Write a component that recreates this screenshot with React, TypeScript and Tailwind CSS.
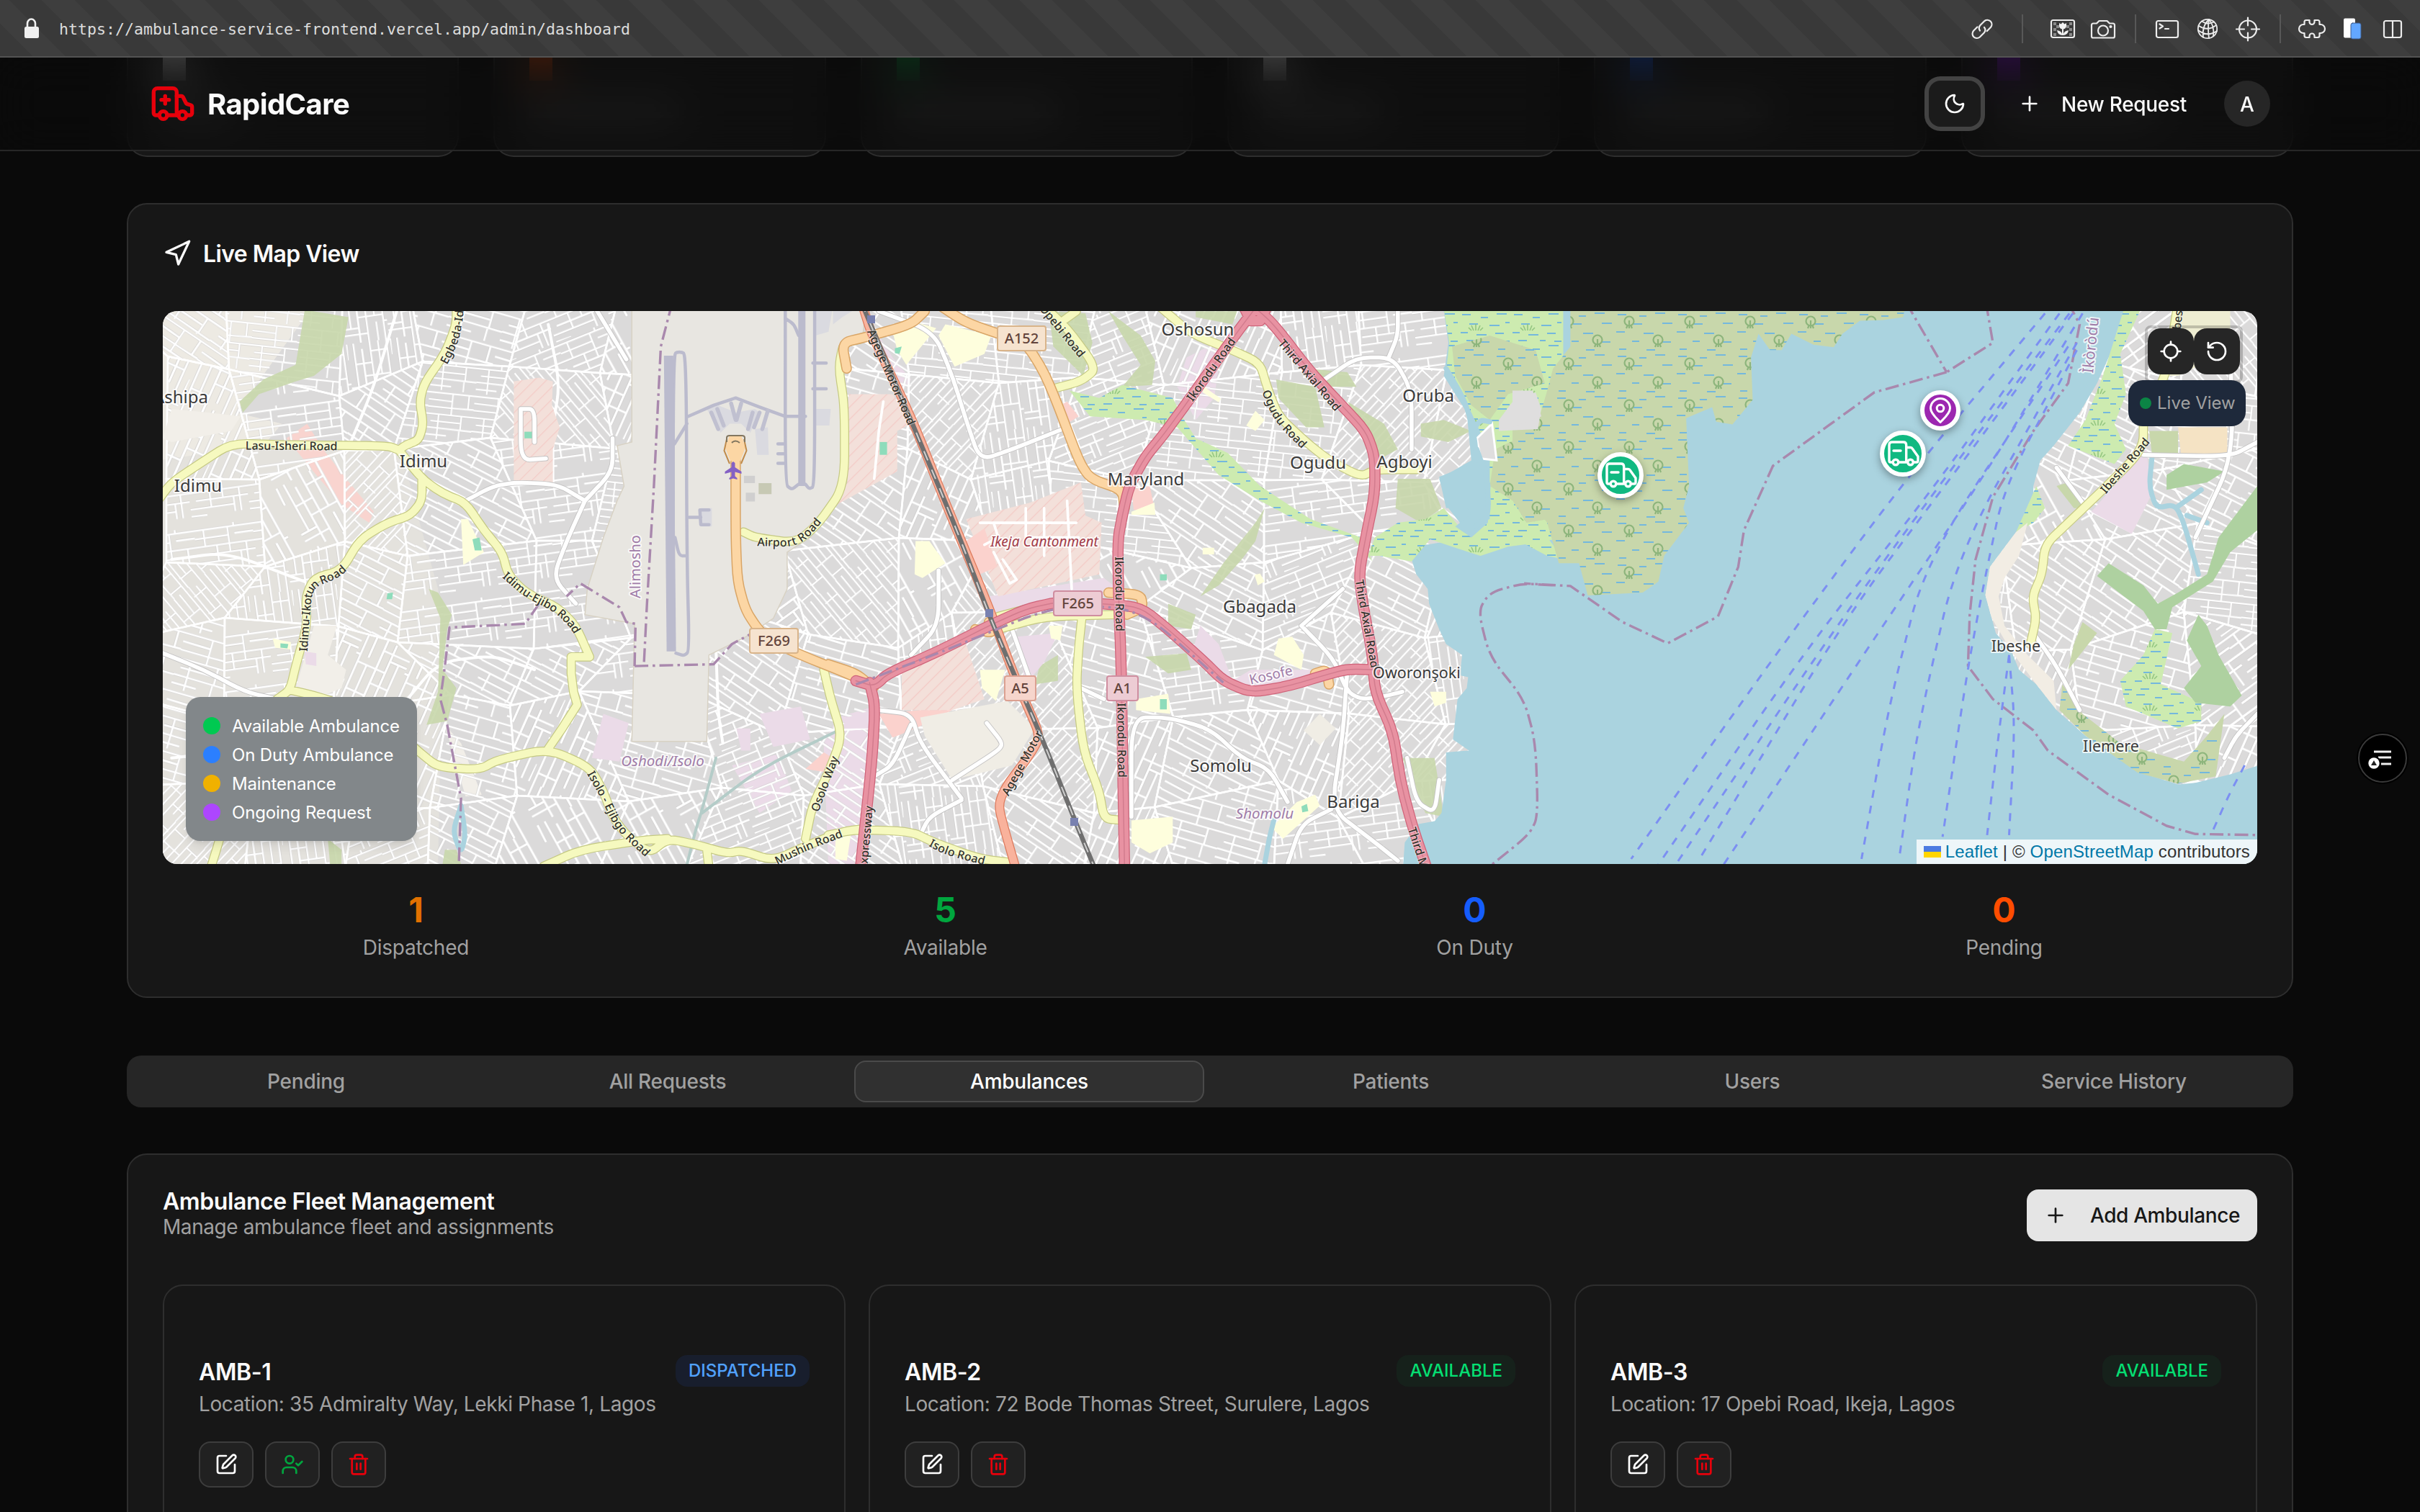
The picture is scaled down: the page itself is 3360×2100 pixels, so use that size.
import React from "react";
import {
  Ambulance,
  Locate,
  Moon,
  Navigation,
  Plus,
  RotateCcw,
  SquarePen,
  Trash2,
  UserCheck,
} from "lucide-react";

/* ------------------------------------------------------------------ */
/* Map geometry                                                        */
/* ------------------------------------------------------------------ */

type Sheet = { sx: number; sy: number; dx: number; dy: number };
type Pt = [number, number];

const WEST: Sheet = { sx: 1.568, sy: 1.96, dx: -26, dy: -12 };
const MID: Sheet = { sx: 1.568, sy: 1.96, dx: 924, dy: -12 };
const EAST: Sheet = { sx: 1.2444, sy: 1.96, dx: 1874, dy: -12 };

const pts = (s: Sheet, raw: string): Pt[] =>
  raw.split(" ").map((p) => {
    const [x, y] = p.split(",").map(Number);
    return [+(x / s.sx + s.dx).toFixed(1), +(y / s.sy + s.dy).toFixed(1)];
  });

const poly = (p: Pt[]) => "M" + p.map((q) => q.join(" ")).join("L") + "Z";
const area = (s: Sheet, raw: string) => poly(pts(s, raw));
const line = (s: Sheet, raw: string) =>
  "M" +
  pts(s, raw)
    .map((q) => q.join(" "))
    .join("L");

// Polyline whose corners are rounded close to each vertex.
const curve = (s: Sheet, raw: string) => {
  const p = pts(s, raw);
  if (p.length < 3) return "M" + p.map((q) => q.join(" ")).join("L");
  const mix = (a: Pt, b: Pt, t: number) => `${(a[0] + (b[0] - a[0]) * t).toFixed(1)} ${(a[1] + (b[1] - a[1]) * t).toFixed(1)}`;
  let d = `M${p[0][0]} ${p[0][1]}`;
  for (let i = 1; i < p.length - 1; i++) {
    d += `L${mix(p[i - 1], p[i], 0.62)}Q${p[i][0]} ${p[i][1]} ${mix(p[i], p[i + 1], 0.38)}`;
  }
  const end = p[p.length - 1];
  return d + `L${end[0]} ${end[1]}`;
};

const STREET_ANGLES = [6, -22, 34, 61, -47, 82, 16, -66, 50, -8, 27, -36];

// Districts: a jittered grid of quads, each with its own street direction.
const districts = (() => {
  let seed = 7;
  const rnd = () => ((seed = (seed * 16807) % 2147483647) / 2147483647);
  const cols = 23;
  const rows = 7;
  const v: Pt[][] = [];
  for (let r = 0; r <= rows; r++) {
    v.push([]);
    for (let c = 0; c <= cols; c++)
      v[r].push([
        Math.round((c / cols) * 2960 - 26 + (rnd() - 0.5) * 80),
        Math.round((r / rows) * 820 - 26 + (rnd() - 0.5) * 64),
      ]);
  }
  const out: { d: string; k: number }[] = [];
  for (let r = 0; r < rows; r++)
    for (let c = 0; c < cols; c++)
      out.push({
        d: poly([v[r][c], v[r][c + 1], v[r + 1][c + 1], v[r + 1][c]]),
        k: Math.floor(rnd() * STREET_ANGLES.length),
      });
  return out;
})();

const LAND: { f: string; d: string }[] = [
  { f: "#edeae3", d: area(WEST, "30,0 360,24 200,300 300,330 240,420 120,500 30,560") },
  { f: "#e4e2dd", d: area(WEST, "30,430 200,400 560,400 600,600 640,780 650,900 640,1529 30,1529") },
  { f: "#f2efe9", d: area(WEST, "655,1150 690,1200 735,1340 700,1345") },
  { f: "#f9d4cf", d: area(WEST, "310,370 355,330 390,400 440,480 500,570 490,600 430,550 375,470") },
  { f: "#ebdbe8", d: area(MID, "110,90 140,150 180,210 150,260") },
  { f: "#ebdbe8", d: area(MID, "780,150 860,100 840,260 800,320 760,230") },
  { f: "#ebdbe8", d: area(MID, "20,1130 100,1100 90,1250 60,1529 0,1529 -10,1200") },
  { f: "#ebdbe8", d: area(WEST, "1280,1260 1380,1230 1410,1330 1340,1390") },
];

const OPEN_WEST = [
  area(WEST, "60,290 140,300 210,310 190,350 60,380 41,370"),
  area(WEST, "370,880 420,880 400,960 440,1000 430,1050 380,1075 330,1050"),
];

const INDUSTRY = [
  area(WEST, "1000,1120 1055,1145 1035,1250 975,1240"),
  area(WEST, "1340,1120 1430,1100 1450,1190 1370,1210"),
  area(WEST, "1290,1160 1320,1160 1320,1220 1300,1220"),
  area(WEST, "350,950 375,955 375,990 352,985"),
  area(MID, "350,800 600,750 640,790 480,830 370,860"),
  area(MID, "410,910 500,900 470,980 430,1040"),
  area(MID, "810,880 850,930 880,1030 920,1000 1080,1000 1000,1050 920,1062 860,1030 790,960"),
  area(MID, "40,1130 95,1110 90,1160 30,1160"),
];

const PARKS = [
  area(WEST, "350,20 445,40 430,140 370,200 330,215 250,250 215,300 208,270 260,210 330,170"),
  area(WEST, "620,780 640,790 670,850 660,890 650,1000 680,1050 660,1140 615,1150 640,1060 645,860"),
  area(WEST, "655,1490 680,1490 690,1529 650,1529"),
  area(WEST, "400,1460 430,1490 430,1529 405,1529"),
  area(MID, "480,24 560,30 575,110 555,200 490,120"),
  area(MID, "610,24 680,90 712,160 705,225 640,230 680,170 640,90"),
  area(MID, "800,24 890,24 880,60 800,40"),
  area(MID, "975,210 1060,230 1080,340 1040,340 980,260"),
  area(MID, "1040,180 1130,190 1150,230 1080,230"),
  area(MID, "1130,270 1210,330 1240,400 1195,430 1170,350"),
  area(MID, "1290,330 1340,320 1400,350 1350,380 1290,365"),
  area(MID, "1240,480 1310,480 1335,560 1290,600 1235,560"),
  area(MID, "740,820 800,850 790,890 740,880"),
  area(MID, "690,965 780,955 790,1000 740,1010"),
  area(MID, "460,990 500,960 500,1030 450,1040"),
  area(MID, "1250,1240 1320,1240 1340,1400 1300,1390"),
  area(MID, "930,600 950,560 930,650 900,700 850,770 810,800 860,710"),
];

const YELLOWS = [
  area(WEST, "690,590 705,590 740,680 695,715"),
  area(WEST, "280,915 320,925 318,945 285,940"),
  area(WEST, "1505,1455 1540,1440 1530,1520 1505,1515"),
  area(MID, "140,80 180,50 235,70 170,170 150,130"),
  area(MID, "255,60 355,90 340,140 275,175 240,90"),
  area(MID, "190,650 220,650 255,710 205,750 188,740"),
  area(MID, "930,295 950,320 930,350 910,335"),
  area(MID, "818,230 855,262 850,272 815,245"),
  area(MID, "660,570 710,545 712,578 660,578"),
  area(MID, "980,915 1010,910 1035,960 1030,1000 970,960"),
  area(MID, "330,1000 385,1000 365,1085 335,1050"),
  area(MID, "660,1410 750,1400 750,1470 700,1500 660,1470"),
  area(MID, "1310,1060 1345,1060 1345,1090 1320,1100"),
  area(MID, "480,880 510,880 505,920 485,915"),
  area(MID, "1020,1360 1060,1340 1070,1370 990,1460 965,1430"),
  area(MID, "670,1080 740,1065 745,1120 670,1110"),
  area(MID, "815,668 840,668 840,686 815,686"),
  area(MID, "928,742 940,738 950,760 935,770"),
];

const PITCHES = [
  area(WEST, "715,645 730,640 735,675 720,675"),
  area(WEST, "828,352 850,352 850,370 828,370"),
  area(WEST, "530,792 542,790 540,808 528,808"),
  area(WEST, "297,928 314,930 312,942 297,940"),
  area(MID, "112,380 128,380 128,415 112,415"),
  area(MID, "722,1080 737,1080 737,1108 722,1108"),
  area(MID, "722,740 737,740 737,757 722,757"),
  area(MID, "145,125 160,120 155,140 145,138"),
  area(MID, "1030,1372 1042,1365 1045,1385 1032,1388"),
];

const MILITARY = [
  area(WEST, "805,215 860,205 890,215 888,280 905,340 890,400 890,495 805,490"),
  area(MID, "45,250 140,250 180,330 150,350 150,460 20,550"),
  area(MID, "300,590 440,545 550,490 560,580 595,600 590,740 370,800 310,620"),
  area(MID, "160,990 300,930 340,1080 270,1110 160,1110"),
];

const RETAIL = [
  area(MID, "300,650 340,615 368,720 330,740"),
  area(MID, "520,270 545,310 520,330 505,280"),
  area(MID, "110,1120 200,1110 270,1110 190,1160 140,1185"),
  area(MID, "660,510 700,500 710,560 665,565"),
  area(WEST, "1440,1270 1480,1225 1500,1240 1490,1280"),
];

const OPEN = [
  area(MID, "200,1130 390,1085 450,1160 400,1260 270,1300 210,1180"),
  area(MID, "1070,1120 1105,1160 1070,1205 1035,1165"),
];

const MARSH_STRIPS = [
  area(MID, "525,240 590,260 640,225 750,260 770,310 800,370 870,410 940,500 1050,590 1160,640 1185,705 1140,640 1030,600 940,540 850,470 760,340 690,320 570,310"),
];

const AIRPORT = area(
  WEST,
  "1062,0 1572,0 1565,90 1525,110 1515,180 1530,300 1530,490 1450,640 1400,680 1400,780 1370,860 1310,910 1230,960 1225,1195 1062,1195 1068,875 960,850 965,780 1000,640 1030,540 1045,500 1030,390 1062,380"
);

const RUNWAYS: { d: string; w: number }[] = [
  { d: curve(WEST, "1142,145 1148,950"), w: 13 },
  { d: curve(WEST, "1432,10 1432,500"), w: 10 },
];
const TAXI = [
  curve(WEST, "1152,900 1152,140 1165,134 1180,140 1182,700 1187,950 1175,962 1158,955"),
  line(WEST, "1185,310 1240,280 1288,260 1340,285 1395,310 1440,310"),
  line(WEST, "1182,330 1155,385"),
  curve(WEST, "1156,640 1165,690 1182,690"),
  curve(WEST, "1396,10 1396,495 1410,510 1425,495"),
  curve(WEST, "1398,45 1415,60 1425,90"),
  curve(WEST, "1460,10 1460,500 1448,508 1440,495"),
  line(WEST, "1456,165 1485,165"),
  line(WEST, "1456,235 1485,235"),
  line(WEST, "1187,585 1212,585"),
  line(WEST, "1230,565 1210,565 1212,605 1230,605"),
  line(WEST, "1380,385 1396,385"),
  line(WEST, "1380,412 1396,412"),
  line(WEST, "1380,438 1396,438"),
];
const APRONS = [
  area(WEST, "1225,290 1250,280 1290,300 1330,290 1340,300 1320,355 1300,330 1275,330 1255,355"),
  area(WEST, "1330,345 1358,340 1360,415 1335,415"),
  area(WEST, "1212,560 1236,560 1236,610 1212,610"),
  area(WEST, "1462,290 1495,290 1492,335 1462,335"),
  area(WEST, "1460,10 1500,10 1490,80 1462,90"),
  area(WEST, "1500,20 1560,10 1520,40 1500,60"),
];

const WATER = poly([
  ...pts(MID, "1335,-20 1350,110 1340,200 1390,300 1400,430 1330,480 1350,560 1400,640 1300,660 1270,700 1280,740 1305,780 1308,820 1330,890 1345,930 1380,960 1375,1015 1393,1020 1390,1050 1370,1080 1360,1190 1395,1220 1345,1225 1345,1300 1335,1390 1320,1412 1285,1420 1255,1470 1250,1560"),
  ...pts(EAST, "1300,1560 1300,1255 1240,1285 1180,1308 1150,1312 1085,1280 1040,1235 990,1180 940,1110 905,1040 875,1000 862,950 835,900 828,860 817,797 825,720 870,625 900,570 900,500 912,430 935,390 980,300 1010,220 1030,150 1055,60 1056,-20"),
]);

const LIGHT_MARSH = [
  area(MID, "1335,-20 1600,-20 1600,640 1540,655 1480,665 1420,690 1370,670 1310,645 1270,705 1200,690 1175,690 1190,640 1240,600 1300,590 1340,560 1380,620 1440,590 1440,410 1400,300 1370,230 1345,190 1352,110"),
  area(EAST, "0,0 60,0 60,640 90,700 60,690 0,640"),
  area(EAST, "1056,20 1085,20 1050,140 1060,250 1040,330 1060,400 1040,440 960,390 990,320 1020,200"),
  area(EAST, "1110,890 1140,900 1120,1040 1190,1090 1190,1140 1150,1160 1060,1100 1050,1030 1090,960"),
  area(EAST, "905,500 920,560 900,600 870,625"),
];

const MANGROVE = [
  area(EAST, "100,0 680,0 675,40 640,48 600,50 570,85 555,122 520,115 482,85 465,130 445,130 425,85 412,150 415,265 380,332 352,325 345,285 300,315 305,500 295,560 305,600 262,690 252,760 225,790 130,798 115,710 80,710 60,600 40,560 0,450 0,345 45,320 60,240 70,180 100,120"),
  area(MID, "1358,120 1440,90 1540,130 1560,220 1480,250 1440,320 1400,280 1365,200"),
  area(MID, "1452,400 1568,330 1568,590 1520,600 1490,540 1440,500"),
  area(EAST, "950,1040 985,1120 1050,1200 1160,1250 1200,1180 1230,1120 1215,1290 1150,1310 1080,1280 990,1180 945,1110"),
];

const EAST_GREEN = [
  area(EAST, "1287,500 1287,620 1240,680 1210,760 1140,830 1130,890 1110,890 1090,840 1010,745 1030,710 1090,770 1115,820 1150,790 1200,740 1220,640"),
  area(EAST, "1200,880 1220,960 1260,1070 1240,1100 1180,1090 1160,1050 1190,990 1165,920 1185,850"),
  area(EAST, "1130,470 1160,440 1230,460 1200,490 1130,510"),
];
const EAST_PARK = [
  area(EAST, "1100,350 1150,350 1150,415 1105,415"),
  area(EAST, "940,500 960,490 990,560 970,560"),
  area(EAST, "960,1000 990,940 1010,900 985,870 970,930"),
];

const STREAMS = [
  curve(MID, "1345,180 1385,265 1405,350 1412,430"),
  curve(MID, "1405,345 1420,320 1440,325"),
  curve(MID, "1412,400 1435,480 1438,580 1410,610"),
  curve(MID, "950,1529 960,1460 970,1410"),
  curve(EAST, "1105,420 1100,500 1112,560 1145,550 1160,600 1185,740"),
  curve(EAST, "1150,555 1190,510"),
  curve(EAST, "1165,580 1200,600"),
  curve(WEST, "690,1370 672,1440 690,1500 700,1450 690,1370"),
];

const CANALS = [
  curve(WEST, "1180,1540 1200,1440 1215,1380 1245,1240"),
  curve(WEST, "1215,1390 1340,1270 1520,1160"),
];

const WHITE_ROADS = [
  curve(WEST, "41,955 130,1000 220,1060 290,1080"),
  curve(WEST, "700,540 760,500 810,490 900,495 960,540"),
  curve(WEST, "960,540 920,650 890,750 940,820"),
  curve(WEST, "960,540 1020,460 1020,370"),
  curve(WEST, "980,10 1050,155"),
  curve(WEST, "820,290 820,430 875,425"),
  curve(WEST, "820,290 850,290 850,380"),
  curve(MID, "110,24 230,80 270,200 300,320 330,430 400,400 510,345"),
  curve(MID, "1080,210 1150,150 1230,150 1270,240 1270,400"),
  curve(MID, "1240,24 1240,90 1220,150"),
  curve(MID, "1030,880 1100,970 1130,1060 1160,1080 1200,1075 1250,1060"),
  curve(MID, "1130,1000 1120,1180 1095,1380 1180,1460 1240,1520"),
  curve(MID, "660,1400 660,1130 740,1130 830,1160 900,1240 960,1270 1000,1360"),
  curve(MID, "110,1110 180,1120 200,1200 290,1350"),
  curve(MID, "180,1150 140,1260 100,1290"),
  curve(MID, "270,1300 370,1220 380,1200 345,1145"),
  curve(MID, "290,1355 220,1400 200,1450"),
  curve(MID, "1000,1529 1030,1420 1095,1380"),
  curve(MID, "240,730 240,880 180,960"),
  curve(MID, "1030,880 1120,780"),
  curve(MID, "550,1050 600,1080"),
  curve(MID, "1260,1240 1280,1360 1320,1390 1330,1300"),
  curve(MID, "400,890 440,1030"),
  curve(EAST, "900,900 940,990 980,1110"),
  curve(EAST, "1090,415 1240,420 1287,380"),
  curve(EAST, "1240,120 1245,420 1180,640"),
  curve(EAST, "940,450 985,545"),
  curve(EAST, "1230,1240 1250,1180 1287,1120"),
];

const LANES = [
  curve(WEST, "550,24 500,230 450,380"),
  curve(WEST, "890,495 890,340 905,220 880,60"),
  curve(WEST, "1245,940 1250,1120 1260,1200"),
  curve(WEST, "560,1100 640,980 760,960 850,1000"),
  curve(WEST, "60,700 180,680 350,760"),
  curve(WEST, "60,1240 200,1220 290,1080"),
  line(MID, "330,600 360,600 370,640 340,660"),
  line(MID, "340,600 540,600"),
  line(MID, "430,560 430,640 545,640"),
  line(MID, "360,680 395,765 410,755 380,700"),
  line(MID, "470,560 470,690"),
  line(MID, "520,540 530,780"),
  line(MID, "120,270 110,350 100,480"),
];

const YELLOW_ROADS = [
  curve(WEST, "30,540 60,490 120,440 190,383 300,388 530,390 555,402"),
  curve(WEST, "680,0 680,60 655,140 610,220 600,270 608,330 598,375 570,388 555,402"),
  curve(WEST, "555,402 585,450 610,485 650,520 700,545 740,620 780,680 792,740 830,790 900,830 940,880 970,965"),
  line(WEST, "970,965 930,965 930,1010 935,1060 943,1095 910,1160 880,1215"),
  curve(WEST, "605,480 605,540 580,580 530,600 470,645 430,730 370,750 352,800 355,880 330,990 318,1055 290,1080"),
  curve(WEST, "318,1055 370,1070 420,1090 560,1180 600,1225 640,1265 730,1272 770,1245 880,1215 970,1265 1000,1330 1020,1400 1050,1450 1100,1500 1140,1460 1200,1475 1270,1500 1300,1492 1370,1520 1440,1480 1520,1440 1575,1432"),
  curve(WEST, "870,1535 950,1490 1080,1465 1140,1460"),
  curve(WEST, "1305,625 1330,640 1420,655 1470,600 1525,500 1525,280 1512,180 1522,110 1560,100"),
  curve(WEST, "145,1540 165,1460 200,1300 290,1080"),
  curve(WEST, "1480,1000 1495,1080 1520,1180 1490,1280 1455,1370 1440,1460"),
  line(WEST, "1225,1490 1230,1540"),
  curve(MID, "465,5 520,70 585,180 550,215 490,235"),
  curve(MID, "725,15 790,85 880,130 940,165 955,230 980,310 1040,380 1090,430 1160,475 1190,455 1285,455"),
  curve(MID, "552,860 545,940 540,1050 555,1220 590,1330 600,1405 640,1410"),
  curve(MID, "370,890 470,855 620,850"),
  curve(MID, "370,855 430,835"),
  line(MID, "500,60 540,24"),
  curve(MID, "0,1450 60,1435 180,1440 230,1470 330,1515 400,1525"),
  curve(EAST, "1150,0 1130,200 1090,300 1090,400 1020,510 960,600 920,660 915,740 898,800 905,860 895,930"),
];

const ORANGE_ROADS = [
  curve(WEST, "1288,400 1288,640 1292,760 1310,840 1340,895 1370,925 1430,960 1540,1015 1590,1045"),
  curve(MID, "245,10 300,55 370,85 430,110 470,190 500,280 545,430 570,480 640,510 645,560"),
  curve(MID, "40,180 30,110 80,95 180,60 210,24"),
  curve(MID, "610,790 680,795 685,830 650,850"),
  curve(MID, "0,985 60,1010 90,1040"),
  curve(MID, "320,890 360,900 350,870"),
  curve(MID, "1060,1010 1085,1000 1090,1040"),
];

const TRUNK_ROADS = [
  curve(MID, "75,10 95,90 180,310 260,560 350,830 400,1000 430,1090 462,1180 440,1230 385,1320 370,1370 385,1440 408,1540"),
];

const MOTORWAYS = [
  curve(MID, "930,15 885,90 800,240 730,360 690,420 655,500 640,580 630,650 632,800 638,1000 640,1200 645,1540"),
  curve(MID, "930,15 970,60 1050,190 1110,270 1170,350 1190,420 1190,520 1170,640 1155,740 1165,830 1185,960 1190,1060 1230,1170 1245,1300 1270,1420 1303,1540"),
  curve(MID, "60,1030 100,1045 130,1010 240,950 350,880 430,835 500,815 600,820 680,830 740,890 820,980 860,1030 920,1062 1000,1045 1080,1015 1130,998 1190,1000"),
  curve(MID, "90,1035 102,1100 95,1250 70,1540"),
  area(MID, "900,0 960,0 940,50 920,50"),
];

const RAIL = curve(MID, "72,0 180,320 280,620 350,850 400,1000 470,1200 540,1420 580,1540");

const BORDERS = [
  line(WEST, "1150,0 1125,120 1110,500 1095,820 1088,990"),
  line(WEST, "1068,990 1240,985 1280,930 1325,900"),
  line(WEST, "1068,990 1070,875 1050,870 1035,830 950,765 920,800"),
  line(WEST, "860,820 830,875 665,885 655,990 645,1080 660,1150 690,1350 685,1540"),
  curve(MID, "60,1040 240,955 500,822 680,835 860,1035"),
  curve(MID, "1575,770 1510,765 1440,790 1415,840 1440,965 1515,1080 1540,1200 1545,1400 1525,1450 1435,1540"),
  line(EAST, "680,0 750,190"),
  line(EAST, "818,0 830,110 750,190"),
  line(EAST, "750,190 625,245 450,445 400,620 390,720 355,855 268,928 190,870 100,772 20,765"),
  line(EAST, "960,0 980,60 960,220 900,350 830,530 800,700 790,850 787,990 830,1080 900,1165 925,1220 1030,1340 1130,1425 1180,1447 1290,1450"),
];

const FERRIES = [
  curve(EAST, "920,30 680,480 440,990 205,1515"),
  curve(EAST, "945,30 730,500 500,960 250,1535"),
  curve(EAST, "962,30 760,450 560,880 280,1535"),
  curve(EAST, "968,30 775,440 575,860 325,1510"),
  curve(EAST, "985,30 820,460 640,880 365,1530"),
  curve(EAST, "960,120 715,700 650,1100 603,1515"),
  curve(EAST, "975,110 770,680 700,1160 668,1515"),
  curve(EAST, "975,130 850,500 815,760 785,1010 743,1455"),
  curve(EAST, "858,960 838,1200 820,1450"),
  curve(EAST, "858,960 868,1150 858,1450"),
  curve(EAST, "1265,1260 1238,1340 1208,1445"),
];

const ROAD_LABELS: { t: string; d: string }[] = [
  { t: "Egbeda-Idimu", d: curve(WEST, "652,165 678,100 688,24 690,-100") },
  { t: "Lasu-Isheri Road", d: curve(WEST, "221,390 450,392") },
  { t: "Idimu-Ikotun Road", d: curve(WEST, "347,950 352,850 360,770 430,735 470,660") },
  { t: "Idimu-Ejibo Road", d: curve(WEST, "785,740 830,790 900,835 940,885 965,960") },
  { t: "Isolo - Ejibgo Road", d: curve(WEST, "972,1278 1000,1340 1035,1430 1100,1505 1130,1540") },
  { t: "Osolo Way", d: curve(WEST, "1460,1385 1485,1300 1515,1200") },
  { t: "Mushin Road", d: curve(WEST, "1375,1522 1440,1482 1540,1435") },
  { t: "Airport Road", d: curve(WEST, "1335,652 1425,655 1490,560") },
  { t: "Agege Motor Road", d: curve(MID, "92,75 190,355") },
  { t: "Opebi Road", d: curve(MID, "465,10 560,155") },
  { t: "Ikorodu Road", d: curve(MID, "786,265 895,75") },
  { t: "Third Axial Road", d: curve(MID, "985,105 1130,320") },
  { t: "Ogudu Road", d: curve(MID, "952,240 980,320 1060,420") },
  { t: "Third Axial Road", d: curve(MID, "1156,755 1195,1030") },
  { t: "Ikorodu Road", d: curve(MID, "633,692 635,930") },
  { t: "Ikorodu Road", d: curve(MID, "638,1090 640,1330") },
  { t: "Agege Motor", d: curve(MID, "385,1340 468,1150") },
  { t: "Isolo Road", d: curve(MID, "222,1470 260,1495 380,1533") },
  { t: "Expressway", d: curve(MID, "76,1545 92,1330") },
  { t: "Third Mainland", d: curve(MID, "1270,1430 1335,1680") },
  { t: "Ibeshe Road", d: curve(EAST, "1020,515 1115,340") },
  { t: "Ibeshe Road", d: curve(EAST, "1147,85 1160,-120") },
];

const PLACES = [
  { t: "Ashipa", x: 25, y: 128 },
  { t: "Idimu", x: 362, y: 217 },
  { t: "Idimu", x: 49, y: 251 },
  { t: "Oshosun", x: 1437, y: 34 },
  { t: "Oruba", x: 1757, y: 126 },
  { t: "Ogudu", x: 1604, y: 219 },
  { t: "Agboyi", x: 1724, y: 218 },
  { t: "Maryland", x: 1365, y: 242 },
  { t: "Gbagada", x: 1523, y: 419 },
  { t: "Somolu", x: 1469, y: 640 },
  { t: "Bariga", x: 1653, y: 690 },
];

const SMALL_PLACES = [
  { t: "Oworonşoki", x: 1741, y: 510 },
  { t: "Ibeshe", x: 2573, y: 473 },
  { t: "Ilemere", x: 2705, y: 612 },
];

const SHIELDS = [
  { t: "F269", x: 815, y: 441, w: 67, f: "#f6e3cf", s: "#d9b48a" },
  { t: "A152", x: 1159, y: 21, w: 67, f: "#f6e3cf", s: "#d9b48a" },
  { t: "F265", x: 1237, y: 389, w: 67, f: "#edccd4", s: "#cf8ea0" },
  { t: "A5", x: 1169, y: 507, w: 43, f: "#f6d5cc", s: "#dba091" },
  { t: "A1", x: 1311, y: 507, w: 43, f: "#edccd4", s: "#cf8ea0" },
];

function Strokes({ d, color, width, dash, cap = "round" }: { d: string[]; color: string; width: number; dash?: string; cap?: "round" | "butt" }) {
  return <path d={d.join("")} fill="none" stroke={color} strokeWidth={width} strokeDasharray={dash} strokeLinecap={cap} strokeLinejoin="round" />;
}

function Fill({ d, color }: { d: string[]; color: string }) {
  return (
    <>
      {d.map((p, i) => (
        <path key={i} d={p} fill={color} />
      ))}
    </>
  );
}

function MapCanvas() {
  return (
    <svg viewBox="0 0 2908 768" className="block h-full w-full" fontFamily="'Noto Sans', sans-serif">
      <defs>
        {STREET_ANGLES.map((a, i) => (
          <pattern key={a} id={`streets-${i}`} width={i % 2 ? 112 : 96} height={i % 3 ? 84 : 104} patternUnits="userSpaceOnUse" patternTransform={`rotate(${a}) scale(${0.66 + (i % 4) * 0.07})`}>
            {[
              { c: "#cdcccc", w: 4.8 },
              { c: "#ffffff", w: 3.5 },
            ].map((s) => (
              <path
                key={s.c}
                fill="none"
                stroke={s.c}
                strokeWidth={s.w}
                d={
                  i % 2
                    ? "M0 7H112M0 23H64M76 21H112M0 39H112M12 55H112M0 70H84M0 83L30 84M18 7V39M64 7V55M96 39V84M40 39V70M76 0V7M84 55V84"
                    : "M0 6L96 6M0 21L50 22M50 36L96 35M0 36H50M0 51H96M8 66H70M0 80L96 81M0 95H44M50 6V51M24 51V104M72 51V81M84 6V35M70 81V104"
                }
              />
            ))}
          </pattern>
        ))}
        <pattern id="hatch" width="12" height="12" patternUnits="userSpaceOnUse" patternTransform="rotate(45)">
          <rect width="12" height="12" fill="#f3e0da" />
          <path d="M0 0V12" stroke="#f3cbc6" strokeWidth="2.5" />
        </pattern>
        <pattern id="marsh" width="72" height="44" patternUnits="userSpaceOnUse">
          <rect width="72" height="44" fill="#cdebb0" />
          <path d="M4 5H16M30 9H40M52 4H66M14 18H26M42 20H56M64 16H70M2 30H12M24 33H38M50 31H62M10 41H22M40 41H48M60 42H70" stroke="#74b8dd" strokeWidth="2.2" />
          <path d="M20 27l-3-7M23 27v-9M26 27l3-7M17 27l-4-4M29 27l4-4" stroke="#93c680" strokeWidth="1.6" />
        </pattern>
        <pattern id="mangrove" width="84" height="58" patternUnits="userSpaceOnUse">
          <rect width="84" height="58" fill="#c8d7ab" />
          <path d="M4 5H16M34 7H44M56 3H70M26 18H38M66 17H80M2 29H14M40 31H54M24 42H34M66 43H78M6 53H16M44 54H56" stroke="#74b8dd" strokeWidth="2.2" />
          <g fill="none" stroke="#8db57c" strokeWidth="2.2">
            <circle cx="20" cy="14" r="6.500" />
            <path d="M20 13V24M16 24l2-5M24 24l-2-5" />
            <circle cx="60" cy="40" r="6.500" />
            <path d="M60 39V50M56 50l2-5M64 50l-2-5" />
          </g>
        </pattern>
        {ROAD_LABELS.map((l, i) => (
          <path key={i} id={`road-label-${i}`} d={l.d} />
        ))}
      </defs>

      <rect width="2908" height="768" fill="#dbdada" />
      {LAND.map((l, i) => (
        <path key={i} d={l.d} fill={l.f} />
      ))}
      {districts.map((q, i) => (
        <path key={i} d={q.d} fill={`url(#streets-${q.k})`} stroke="#ffffff" strokeWidth="2.600" />
      ))}
      <Strokes d={LANES} color="#ffffff" width={4} />
      <g opacity="0.9">
        <Fill d={PARKS} color="#c8d7ab" />
      </g>
      <Fill d={OPEN_WEST} color="#f2efe9" />
      <Fill d={INDUSTRY} color="#ebdbe8" />
      <Fill d={MILITARY} color="url(#hatch)" />
      <Fill d={RETAIL} color="#fbd2cd" />
      <Strokes d={LANES.slice(6)} color="#ffffff" width={3.6} />
      <Fill d={OPEN} color="#f0ede5" />
      <Fill d={YELLOWS} color="#fefedd" />
      <Fill d={PITCHES} color="#8edcbb" />
      <Fill d={MARSH_STRIPS} color="url(#marsh)" />
      <Strokes d={CANALS} color="#b4ccc8" width={4} />

      <path d={AIRPORT} fill="#e8e6e1" stroke="#d8d2c4" strokeWidth="1.5" />
      <Fill d={APRONS} color="#dadae0" />
      <Strokes d={TAXI} color="#bbbbcd" width={4.5} />
      {RUNWAYS.map((r) => (
        <path key={r.d} d={r.d} stroke="#bbbbcd" strokeWidth={r.w} />
      ))}
      <Strokes
        d={[
          line(WEST, "1235,300 1250,345"),
          line(WEST, "1248,290 1262,335"),
          line(WEST, "1278,275 1288,320"),
          line(WEST, "1300,275 1290,320"),
          line(WEST, "1325,300 1315,345"),
          line(WEST, "1340,300 1328,340"),
          line(WEST, "1358,295 1346,345"),
        ]}
        color="#c0c0d0"
        width={5.5}
      />
      <Fill d={[area(WEST, "1338,492 1366,492 1366,522 1338,522")]} color="#c7c9b4" />
      <Fill d={[area(WEST, "1306,472 1330,472 1330,492 1306,492"), area(WEST, "1310,518 1330,518 1330,542 1310,542")]} color="#d0cfcf" />

      <path d={WATER} fill="#aad3df" />
      <Fill d={LIGHT_MARSH} color="url(#marsh)" />
      <Fill d={MANGROVE} color="url(#mangrove)" />
      <path d={area(MID, "1330,475 1400,440 1430,430 1442,500 1436,600 1400,640 1365,610 1400,575 1390,560 1345,560")} fill="#aad3df" />
      <path d={area(MID, "1460,320 1490,270 1540,245 1552,290 1545,345 1460,350")} fill="#dfdede" />
      <path d={area(MID, "1412,370 1445,330 1455,430 1420,425")} fill="#dfdede" stroke="#fff" strokeWidth="3" />
      <path d={area(EAST, "0,240 35,240 50,310 0,340")} fill="#dfdede" />
      <path d={area(EAST, "817,797 825,720 870,625 890,600 875,690 850,750 840,800 850,880 870,920 890,960 935,1030 940,1110 905,1040 862,950 828,860")} fill="#f2ede4" />
      <Fill d={EAST_GREEN} color="#aed1a0" />
      <Fill d={EAST_PARK} color="#c8d7ab" />
      <path d={area(EAST, "1000,570 1050,480 1095,400 1105,520 1070,630")} fill="#ebdbe8" />
      <path d={area(EAST, "1150,340 1235,340 1235,415 1155,415")} fill="#f5e3c4" />
      <path d={area(EAST, "1160,20 1240,20 1240,130 1150,200 1130,200")} fill="#eeedd2" />
      <Strokes d={STREAMS} color="#aad3df" width={7} />

      <Strokes d={WHITE_ROADS} color="#c4c3c3" width={7.4} />
      <Strokes d={WHITE_ROADS} color="#ffffff" width={5.6} />
      <Strokes d={YELLOW_ROADS} color="#c5c983" width={12.8} />
      <Strokes d={YELLOW_ROADS} color="#f6f9bf" width={10.4} />
      <Strokes d={ORANGE_ROADS} color="#d9a566" width={14.5} />
      <Strokes d={ORANGE_ROADS} color="#fcd6a4" width={11.5} />
      <path d="M787 172 781 190 788 208H802L809 190 803 172Z" fill="#fcd6a4" />
      <path d="M783 178 779.500 194 787 212M807 178 810.500 194 803 212" fill="none" stroke="#c08b4a" strokeWidth="2" />
      <path d="M783 182V176Q783 173 787 173H804Q808 173 808 176V182M790 183Q795 178 801 183" fill="none" stroke="#82765f" strokeWidth="2" />
      <Strokes d={TRUNK_ROADS} color="#dd7a5d" width={13} />
      <Strokes d={TRUNK_ROADS} color="#f9b29c" width={10.5} />
      <Strokes d={MOTORWAYS} color="#cf6379" width={15.5} />
      <Strokes d={MOTORWAYS} color="#e892a2" width={13} />
      <Strokes d={MOTORWAYS.slice(0, 4)} color="#d27c8e" width={1.5} />
      <path d={RAIL} fill="none" stroke="#6f6f6f" strokeWidth="6.500" />
      <path d={RAIL} fill="none" stroke="#cfcfcf" strokeWidth="2" strokeDasharray="14 14" />

      <Strokes d={BORDERS} color="#a988ad" width={3.4} dash="19 6 3.5 6" cap="butt" />
      <Strokes d={FERRIES} color="#7c8ff2" width={3} dash="11 11" cap="butt" />

      {[
        [978, 6],
        [1142, 414],
        [1260, 704],
      ].map(([x, y]) => (
        <rect key={x} x={x} y={y} width="11" height="11" fill="#7981b0" />
      ))}
      <path d="M792 209l2.500 2v6l9 6v3l-9-2.500v6l3 2.500v2l-5.500-1.500-5.500 1.500v-2l3-2.500v-6l-9 2.500v-3l9-6v-6z" fill="#8461c4" />

      <g fontSize="16" fontWeight="500" fill="#33332c" stroke="#ffffff" strokeOpacity="0.4" strokeWidth="2.500" paintOrder="stroke">
        {ROAD_LABELS.map((l, i) => (
          <text key={i} dy="5.500">
            <textPath href={`#road-label-${i}`}>{l.t}</textPath>
          </text>
        ))}
      </g>

      {SHIELDS.map((s) => (
        <g key={s.t}>
          <rect x={s.x} y={s.y} width={s.w} height="34" rx="3" fill={s.f} stroke={s.s} strokeWidth="2" />
          <text x={s.x + s.w / 2} y={s.y + 24} textAnchor="middle" fontSize="20" fontWeight="500" fill="#63443c">
            {s.t}
          </text>
        </g>
      ))}

      <g textAnchor="middle" fill="#3b3b3b" stroke="#ffffff" strokeOpacity="0.75" strokeWidth="4" paintOrder="stroke" strokeLinejoin="round">
        {PLACES.map((p) => (
          <text key={p.t + p.x} x={p.x} y={p.y} fontSize="24">
            {p.t}
          </text>
        ))}
        {SMALL_PLACES.map((p) => (
          <text key={p.t} x={p.x} y={p.y} fontSize="21.500">
            {p.t}
          </text>
        ))}
        <text x="1224" y="327" fontSize="19" fontStyle="italic" fill="#a13a48">
          Ikeja Cantonment
        </text>
        <g fill="#a07ca8">
          <text x="694" y="632" fontSize="20.500" fontStyle="italic">
            Oshodi/Isolo
          </text>
          <text x="1530" y="705" fontSize="20.500" fontStyle="italic">
            Shomolu
          </text>
          <text transform="translate(1540 512) rotate(-13)" fontSize="19">
            Kosofe
          </text>
          <text transform="translate(663 355) rotate(-90)" fontSize="20">
            Alimosho
          </text>
          <text transform="translate(2684 48) rotate(-84)" fontSize="21">
            Ìkòròdú
          </text>
        </g>
      </g>
    </svg>
  );
}

/* ------------------------------------------------------------------ */
/* Map overlays                                                        */
/* ------------------------------------------------------------------ */

function VanMarker({ place }: { place: string }) {
  return (
    <div className={`absolute flex size-16 items-center justify-center rounded-full border-6 border-white bg-[#10b981] shadow-[0_4px_12px_rgba(0,0,0,0.35)] ${place}`}>
      <svg viewBox="-26 -26 52 52" className="size-[52px] shrink-0" fill="none" stroke="white" strokeWidth="3.400" strokeLinecap="round" strokeLinejoin="round">
        <path d="M-15.500 12H-17Q-19 12-19 10V-12Q-19-16-15-16H0.700Q4.700-16 4.700-12V12H-4.500" />
        <path d="M4.700-8.500H10.500Q12.500-8.500 13.500-6.500L21 4V10Q21 12 19 12H15.500" />
        <path d="M-13-4H-3" />
        <circle cx="-10" cy="12" r="3.800" />
        <circle cx="10.500" cy="12" r="3.800" />
      </svg>
    </div>
  );
}

function RequestMarker() {
  return (
    <div className="absolute left-[2440px] top-[110px] flex size-14 items-center justify-center rounded-full border-6 border-white bg-[#9c27b0] shadow-[0_4px_12px_rgba(0,0,0,0.35)]">
      <svg viewBox="-22 -22 44 44" className="size-11 shrink-0" fill="none" stroke="white" strokeWidth="3" strokeLinecap="round" strokeLinejoin="round">
        <path d="M0 16.500C-4 12-13.500 4.500-13.500-3A13.500 13.500 0 0 1 13.500-3C13.500 4.500 4 12 0 16.500Z" />
        <circle cx="0" cy="-3" r="4.800" />
      </svg>
    </div>
  );
}

const LEGEND = [
  { t: "Available Ambulance", c: "bg-green-500" },
  { t: "On Duty Ambulance", c: "bg-blue-500" },
  { t: "Maintenance", c: "bg-yellow-500" },
  { t: "Ongoing Request", c: "bg-purple-500" },
];

function LiveMap() {
  return (
    <div className="relative h-[768px] overflow-hidden rounded-[20px]">
      <MapCanvas />
      <VanMarker place="left-[1992px] top-[196px]" />
      <VanMarker place="left-[2384px] top-[166px]" />
      <RequestMarker />

      <div className="absolute right-5 top-5 flex h-20 rounded-lg border-4 border-black/20">
        <div className="flex size-16 items-center justify-center rounded-[18px] bg-[#262626] text-white">
          <Locate size={32} />
        </div>
        <div className="flex size-16 items-center justify-center rounded-[18px] bg-[#262626] text-white">
          <RotateCcw size={32} />
        </div>
      </div>
      <div className="absolute right-4 top-24 flex h-16 w-[163px] items-center gap-2 rounded-[20px] bg-[#1e293b] pl-4 text-2xl text-[#a1a1a1]">
        <span className="size-4 shrink-0 rounded-full bg-[#0b8545]" />
        <span className="whitespace-nowrap">Live View</span>
      </div>

      <div className="absolute bottom-8 left-8 flex w-[321px] flex-col gap-2 rounded-[20px] bg-[#82878a] p-6 shadow-lg">
        {LEGEND.map((l) => (
          <div key={l.t} className="flex h-8 items-center gap-4">
            <span className={`size-6 shrink-0 rounded-full ${l.c}`} />
            <span className="whitespace-nowrap pt-0.5 text-2xl tracking-[-0.15px] text-white">{l.t}</span>
          </div>
        ))}
      </div>

      <div className="absolute bottom-0 right-0 flex h-[34px] items-center whitespace-nowrap bg-white/80 px-2.5 font-['Liberation_Sans',sans-serif] text-2xl tracking-[0.15px] text-[#333]">
        <svg viewBox="0 0 24 16" className="mr-1.5 h-4 w-6">
          <path fill="#4C7BE1" d="M0 0h24v8H0z" />
          <path fill="#FFD500" d="M0 8h24v8H0z" />
        </svg>
        <span>
          <span className="text-[#0078a8]">Leaflet</span> | © <span className="text-[#0078a8]">OpenStreetMap</span> contributors
        </span>
      </div>
    </div>
  );
}

/* ------------------------------------------------------------------ */
/* Browser bar                                                         */
/* ------------------------------------------------------------------ */

function Tool({ children }: { children: React.ReactNode }) {
  return (
    <svg viewBox="0 0 40 40" className="size-10" fill="none" stroke="#ececec" strokeWidth="2.200" strokeLinecap="round" strokeLinejoin="round">
      {children}
    </svg>
  );
}

function Divider({ place }: { place: string }) {
  return <span className={`h-10 w-0.5 bg-[#585858] ${place}`} />;
}

function BrowserBar() {
  return (
    <div className="flex h-20 shrink-0 items-center border-b-2 border-[#535353] bg-[repeating-linear-gradient(45deg,#393939_0px,#393939_32px,#3e3e3e_32px,#3e3e3e_64px)] pr-[18px] pt-0.5">
      <svg viewBox="0 0 24 32" className="ml-8 h-8 w-6">
        <path d="M6 14V8.500a5.500 6 0 0 1 11 0V14" fill="none" stroke="#f0f0f0" strokeWidth="2.600" />
        <rect x="2" y="13" width="20" height="16" rx="2.500" fill="#f0f0f0" />
      </svg>
      <span className="ml-[26px] pt-0.5 font-['DejaVu_Sans_Mono',monospace] text-[21.6px] text-[#dcdcdc]">
        https://ambulance-service-frontend.vercel.app/admin/dashboard
      </span>
      <div className="ml-auto flex items-center">
        <Tool>
          <path d="M17 22.500a6 6 0 0 1 .2-7.200l6.300-6.300a6.200 6.200 0 0 1 8.600 8.800l-5.400 5.400" />
          <path d="M23 18a6 6 0 0 1-.2 7.500l-6 6a6.200 6.200 0 0 1-8.700-8.800l5.200-5.200" />
        </Tool>
        <Divider place="ml-[35px] mr-[35px]" />
        <Tool>
          <rect x="4" y="8" width="32" height="24" rx="2.500" />
          <path d="M7 11h4v4H7zM29 11h4v4h-4zM7 19h4v4H7zM29 19h4v4h-4zM11 15h4v4h-4zM25 15h4v4h-4zM7 26h4v4H7zM29 26h4v4h-4z" fill="#8a8a8a" stroke="none" />
          <path d="M15 12l2.500 1.500L20 11l2.500 2.500L25 12v4.500q-1 4-5 4t-5-4zM19 20h2v7q1-4 7-5-1 7-8 7t-8-7q6 1 7 5z" fill="#f2f2f2" stroke="none" />
        </Tool>
        <div className="w-4" />
        <Tool>
          <path d="M4 15q0-2.500 2.500-2.500H11l3.500-3.500h11l3.500 3.500h4.500q2.500 0 2.500 2.500v15.500q0 2-2 2H6q-2 0-2-2z" />
          <circle cx="20" cy="22.500" r="7" />
          <circle cx="30.500" cy="17" r="1" fill="#ececec" />
        </Tool>
        <Divider place="ml-6 mr-[23px]" />
        <Tool>
          <rect x="5" y="9" width="30" height="23" rx="2.500" />
          <path d="M9.500 13.500l4.500 3-4.500 3M17 20h5" />
        </Tool>
        <div className="w-4" />
        <Tool>
          <g strokeWidth="1.800">
            <circle cx="20" cy="20" r="13.200" />
            <path d="M22 7Q12 16 14 32M22 7Q20 18 22 33M22 7Q30 16 28 30M8 16Q20 24 32 15M7 22Q20 32 33 23M12 9.500Q20 15 29 10.500" />
          </g>
        </Tool>
        <div className="w-4" />
        <Tool>
          <circle cx="20" cy="20.500" r="12" />
          <path d="M20 4.500v11M20 25.500v11M4 20.500h11M25 20.500h11" />
        </Tool>
        <Divider place="ml-6 mr-[23px]" />
        <Tool>
          <path d="M13.500 8h3v2.500a3.500 3.500 0 0 0 7 0V8h4.500q2.500 0 2.500 2.500v3.500h1.500a5.500 5.500 0 0 1 0 12h-1.500v3.500q0 2.500-2.500 2.500h-4.500v-2a3.500 3.500 0 0 0-7 0v2H12q-2.500 0-2.500-2.500V26H8a5.500 5.500 0 0 1 0-12h1.500v-3.500Q9.500 8 12 8z" />
        </Tool>
        <div className="w-4" />
        <Tool>
          <rect x="8" y="5.500" width="16" height="27" rx="2" fill="#ffffff" stroke="none" />
          <rect x="18" y="12" width="14" height="22" rx="2.500" fill="#63a7ff" stroke="#3d5a8a" strokeWidth="1" />
        </Tool>
        <div className="w-4" />
        <Tool>
          <rect x="8" y="9" width="24" height="23" rx="2.500" />
          <path d="M20 9v23" />
        </Tool>
      </div>
    </div>
  );
}

/* ------------------------------------------------------------------ */
/* Page                                                                */
/* ------------------------------------------------------------------ */

function Header() {
  return (
    <header className="absolute inset-x-0 top-0 h-[130px] border-b-2 border-[#272727] bg-[#0a0a0a]/60 backdrop-blur-[30px]">
      <div className="flex h-32 items-center px-[208px]">
        <Ambulance size={64} className="text-red-600" />
        <span className="ml-4 pt-0.5 text-[40px] font-bold tracking-[-0.6px]">RapidCare</span>
        <div className="ml-auto flex items-center gap-8">
          <div className="flex h-16 w-[72px] items-center justify-center rounded-2xl bg-[#1b1b1b] ring-6 ring-[#434343]">
            <Moon size={32} />
          </div>
          <div className="flex items-center gap-7 px-5 text-[28px] font-medium tracking-[-0.3px]">
            <Plus size={32} />
            <span className="pt-px">New Request</span>
          </div>
          <div className="flex size-16 items-center justify-center rounded-full bg-[#262626] pt-px text-[28px] font-medium">A</div>
        </div>
      </div>
    </header>
  );
}

const SUMMARY = [
  { c: "bg-white", w: "w-24" },
  { c: "bg-orange-600", w: "w-52" },
  { c: "bg-green-600", w: "w-56" },
  { c: "bg-white", w: "w-40" },
  { c: "bg-blue-600", w: "w-48" },
  { c: "bg-purple-600", w: "w-56" },
];

function SummaryRow() {
  return (
    <div className="grid h-[138px] grid-cols-6 gap-12 px-[176px]">
      {SUMMARY.map((s, i) => (
        <div key={i} className="rounded-b-[28px] border-2 border-t-0 border-[#2e2e2e] bg-[#171717] px-12">
          <div className={`h-8 w-8 opacity-60 ${s.c}`} />
          <div className={`mt-8 h-5 bg-[#777] opacity-50 ${s.w}`} />
        </div>
      ))}
    </div>
  );
}

const STATS = [
  { n: 1, t: "Dispatched", c: "text-[#e17100]" },
  { n: 5, t: "Available", c: "text-green-600" },
  { n: 0, t: "On Duty", c: "text-blue-600" },
  { n: 0, t: "Pending", c: "text-[#ff4d00]" },
];

const TABS = ["Pending", "All Requests", "Ambulances", "Patients", "Users", "Service History"];

const FLEET = [
  { id: "AMB-1", where: "35 Admiralty Way, Lekki Phase 1, Lagos", state: "DISPATCHED" },
  { id: "AMB-2", where: "72 Bode Thomas Street, Surulere, Lagos", state: "AVAILABLE" },
  { id: "AMB-3", where: "17 Opebi Road, Ikeja, Lagos", state: "AVAILABLE" },
];

function Action({ children, tone }: { children: React.ReactNode; tone: string }) {
  return <div className={`flex h-16 w-19 items-center justify-center rounded-2xl border-2 border-[#3d3d3d] bg-[#212121] ${tone}`}>{children}</div>;
}

function FleetCard({ id, where, state }: { id: string; where: string; state: string }) {
  const out = state === "DISPATCHED";
  return (
    <div className="h-[400px] rounded-[28px] border-2 border-[#2e2e2e] px-12 pt-[94px]">
      <div className="flex h-12 items-center justify-between">
        <span className="pt-1 text-[32px] font-semibold leading-none tracking-[-0.4px]">{id}</span>
        <span className={`flex h-11 items-center rounded-2xl px-[18px] text-2xl font-medium ${out ? "bg-[#181e2d] text-blue-400" : "bg-[#16211b] text-green-400"}`}>{state}</span>
      </div>
      <div className="mt-0.5 text-[28px] leading-10 tracking-[-0.38px] text-[#a1a1a1]">Location: {where}</div>
      <div className="mt-8 flex gap-4">
        <Action tone="text-white">
          <SquarePen size={32} />
        </Action>
        {out && (
          <Action tone="text-green-600">
            <UserCheck size={32} />
          </Action>
        )}
        <Action tone="text-red-600">
          <Trash2 size={32} />
        </Action>
      </div>
    </div>
  );
}

export default function App() {
  return (
    <div className="flex h-[2100px] w-[3360px] flex-col overflow-hidden bg-[#0a0a0a] font-['Inter',sans-serif] text-[#fafafa]">
      <BrowserBar />
      <main className="relative flex-1 overflow-hidden">
        <SummaryRow />

        <section className="mx-[176px] mt-16 h-[1104px] rounded-[28px] border-2 border-[#2e2e2e] bg-[#171717] p-12">
          <div className="flex h-10 items-center gap-4">
            <Navigation size={40} />
            <h2 className="pt-0.5 text-[32px] font-semibold leading-none tracking-[-0.6px]">Live Map View</h2>
          </div>
          <div className="mt-[60px]">
            <LiveMap />
          </div>
          <div className="mt-8 grid grid-cols-4 gap-8 text-center">
            {STATS.map((s) => (
              <div key={s.t}>
                <div className={`text-[48px] font-bold leading-[64px] ${s.c}`}>{s.n}</div>
                <div className="text-[28px] leading-10 tracking-[-0.25px] text-[#a1a1a1]">{s.t}</div>
              </div>
            ))}
          </div>
        </section>

        <nav className="mx-[176px] mt-20 grid h-[72px] grid-cols-6 gap-4 rounded-[20px] bg-[#262626] px-1.5 py-[7px] text-[28px] font-medium tracking-[-0.25px]">
          {TABS.map((t) => (
            <div
              key={t}
              className={`flex items-center justify-center rounded-2xl border-2 ${t === "Ambulances" ? "border-[#4a4a4a] bg-[#303030] text-white" : "border-transparent text-[#a1a1a1]"}`}
            >
              {t}
            </div>
          ))}
        </nav>

        <section className="mx-[176px] mt-16 h-[700px] rounded-[28px] border-2 border-[#2e2e2e] bg-[#171717] p-12">
          <div className="flex h-[72px] items-center justify-between">
            <div>
              <h2 className="pt-px text-[32px] font-semibold leading-[31px] tracking-[-0.42px]">Ambulance Fleet Management</h2>
              <p className="text-[28px] leading-10 tracking-[-0.42px] text-[#a1a1a1]">Manage ambulance fleet and assignments</p>
            </div>
            <div className="flex h-[72px] items-center gap-8 rounded-2xl bg-[#e5e5e5] px-6 text-[28px] font-medium tracking-[-0.38px] text-[#171717]">
              <Plus size={32} />
              <span>Add Ambulance</span>
            </div>
          </div>
          <div className="mt-[60px] grid grid-cols-3 gap-8">
            {FLEET.map((f) => (
              <FleetCard key={f.id} {...f} />
            ))}
          </div>
        </section>

        <Header />

        <div className="absolute right-[18px] top-[939px] flex size-[68px] items-center justify-center rounded-full border-2 border-[#3a3a3a] bg-black shadow-[0_0_0_2px_#000]">
          <svg viewBox="0 0 64 64" className="size-16 shrink-0">
            <path d="M20 23H44M26 31H44M30 40H44" stroke="#eeeeee" strokeWidth="3" />
            <circle cx="20" cy="39" r="10" fill="#000" />
            <circle cx="20" cy="39" r="7.700" fill="#fff" />
            <path d="M20 35l4 7h-8z" fill="#222" />
          </svg>
        </div>
      </main>
    </div>
  );
}
